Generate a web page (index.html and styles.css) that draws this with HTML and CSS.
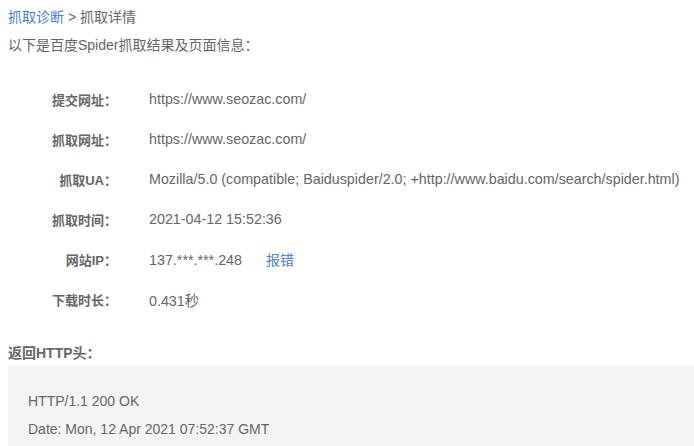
FILE: index.html
```html
<!DOCTYPE html>
<html lang="zh-CN">
<head>
<meta charset="utf-8">
<title>抓取详情</title>
<link rel="stylesheet" href="styles.css">
</head>
<body>
<div class="page">
  <div class="crumb"><a class="link" href="#">抓取诊断</a> &gt; 抓取详情</div>
  <div class="intro">以下是百度Spider抓取结果及页面信息：</div>
  <div class="info">
    <div class="row"><div class="label">提交网址：</div><div class="value">https://www.seozac.com/</div></div>
    <div class="row"><div class="label">抓取网址：</div><div class="value">https://www.seozac.com/</div></div>
    <div class="row"><div class="label">抓取UA：</div><div class="value">Mozilla/5.0 (compatible; Baiduspider/2.0; +http://www.baidu.com/search/spider.html)</div></div>
    <div class="row"><div class="label">抓取时间：</div><div class="value">2021-04-12 15:52:36</div></div>
    <div class="row"><div class="label">网站IP：</div><div class="value">137.***.***.248<a class="link report" href="#">报错</a></div></div>
    <div class="row"><div class="label">下载时长：</div><div class="value">0.431秒</div></div>
  </div>
  <div class="heading">返回HTTP头：</div>
  <div class="headers">
    <div class="line">HTTP/1.1 200 OK</div>
    <div class="line">Date: Mon, 12 Apr 2021 07:52:37 GMT</div>
  </div>
</div>
</body>
</html>
```
FILE: styles.css
```css
html, body {
  margin: 0;
  padding: 0;
  background: #fff;
}
body {
  font-family: "Liberation Sans", "Noto Sans CJK SC", sans-serif;
  font-size: 14px;
  color: #666;
}
.page {
  padding: 4px 0 0 8px;
}
.link {
  color: #4a7fd6;
  text-decoration: none;
}
.crumb {
  line-height: 26px;
}
.intro {
  line-height: 28px;
  margin-top: 1px;
}
.info {
  margin-top: 20px;
}
.row {
  display: flex;
  align-items: center;
  height: 40px;
}
.label {
  width: 109px;
  text-align: right;
  font-weight: bold;
  font-size: 13px;
  flex: none;
}
.value {
  margin-left: 32px;
  white-space: nowrap;
  font-size: 14.3px;
}
.report {
  margin-left: 24px;
  font-size: 14px;
}
.heading {
  margin-top: 20px;
  line-height: 28px;
  font-weight: bold;
}
.headers {
  margin-top: -1px;
  background: #f4f4f4;
  padding: 21px 0 20px 20px;
  font-size: 14px;
}
.line {
  line-height: 28px;
}
```
